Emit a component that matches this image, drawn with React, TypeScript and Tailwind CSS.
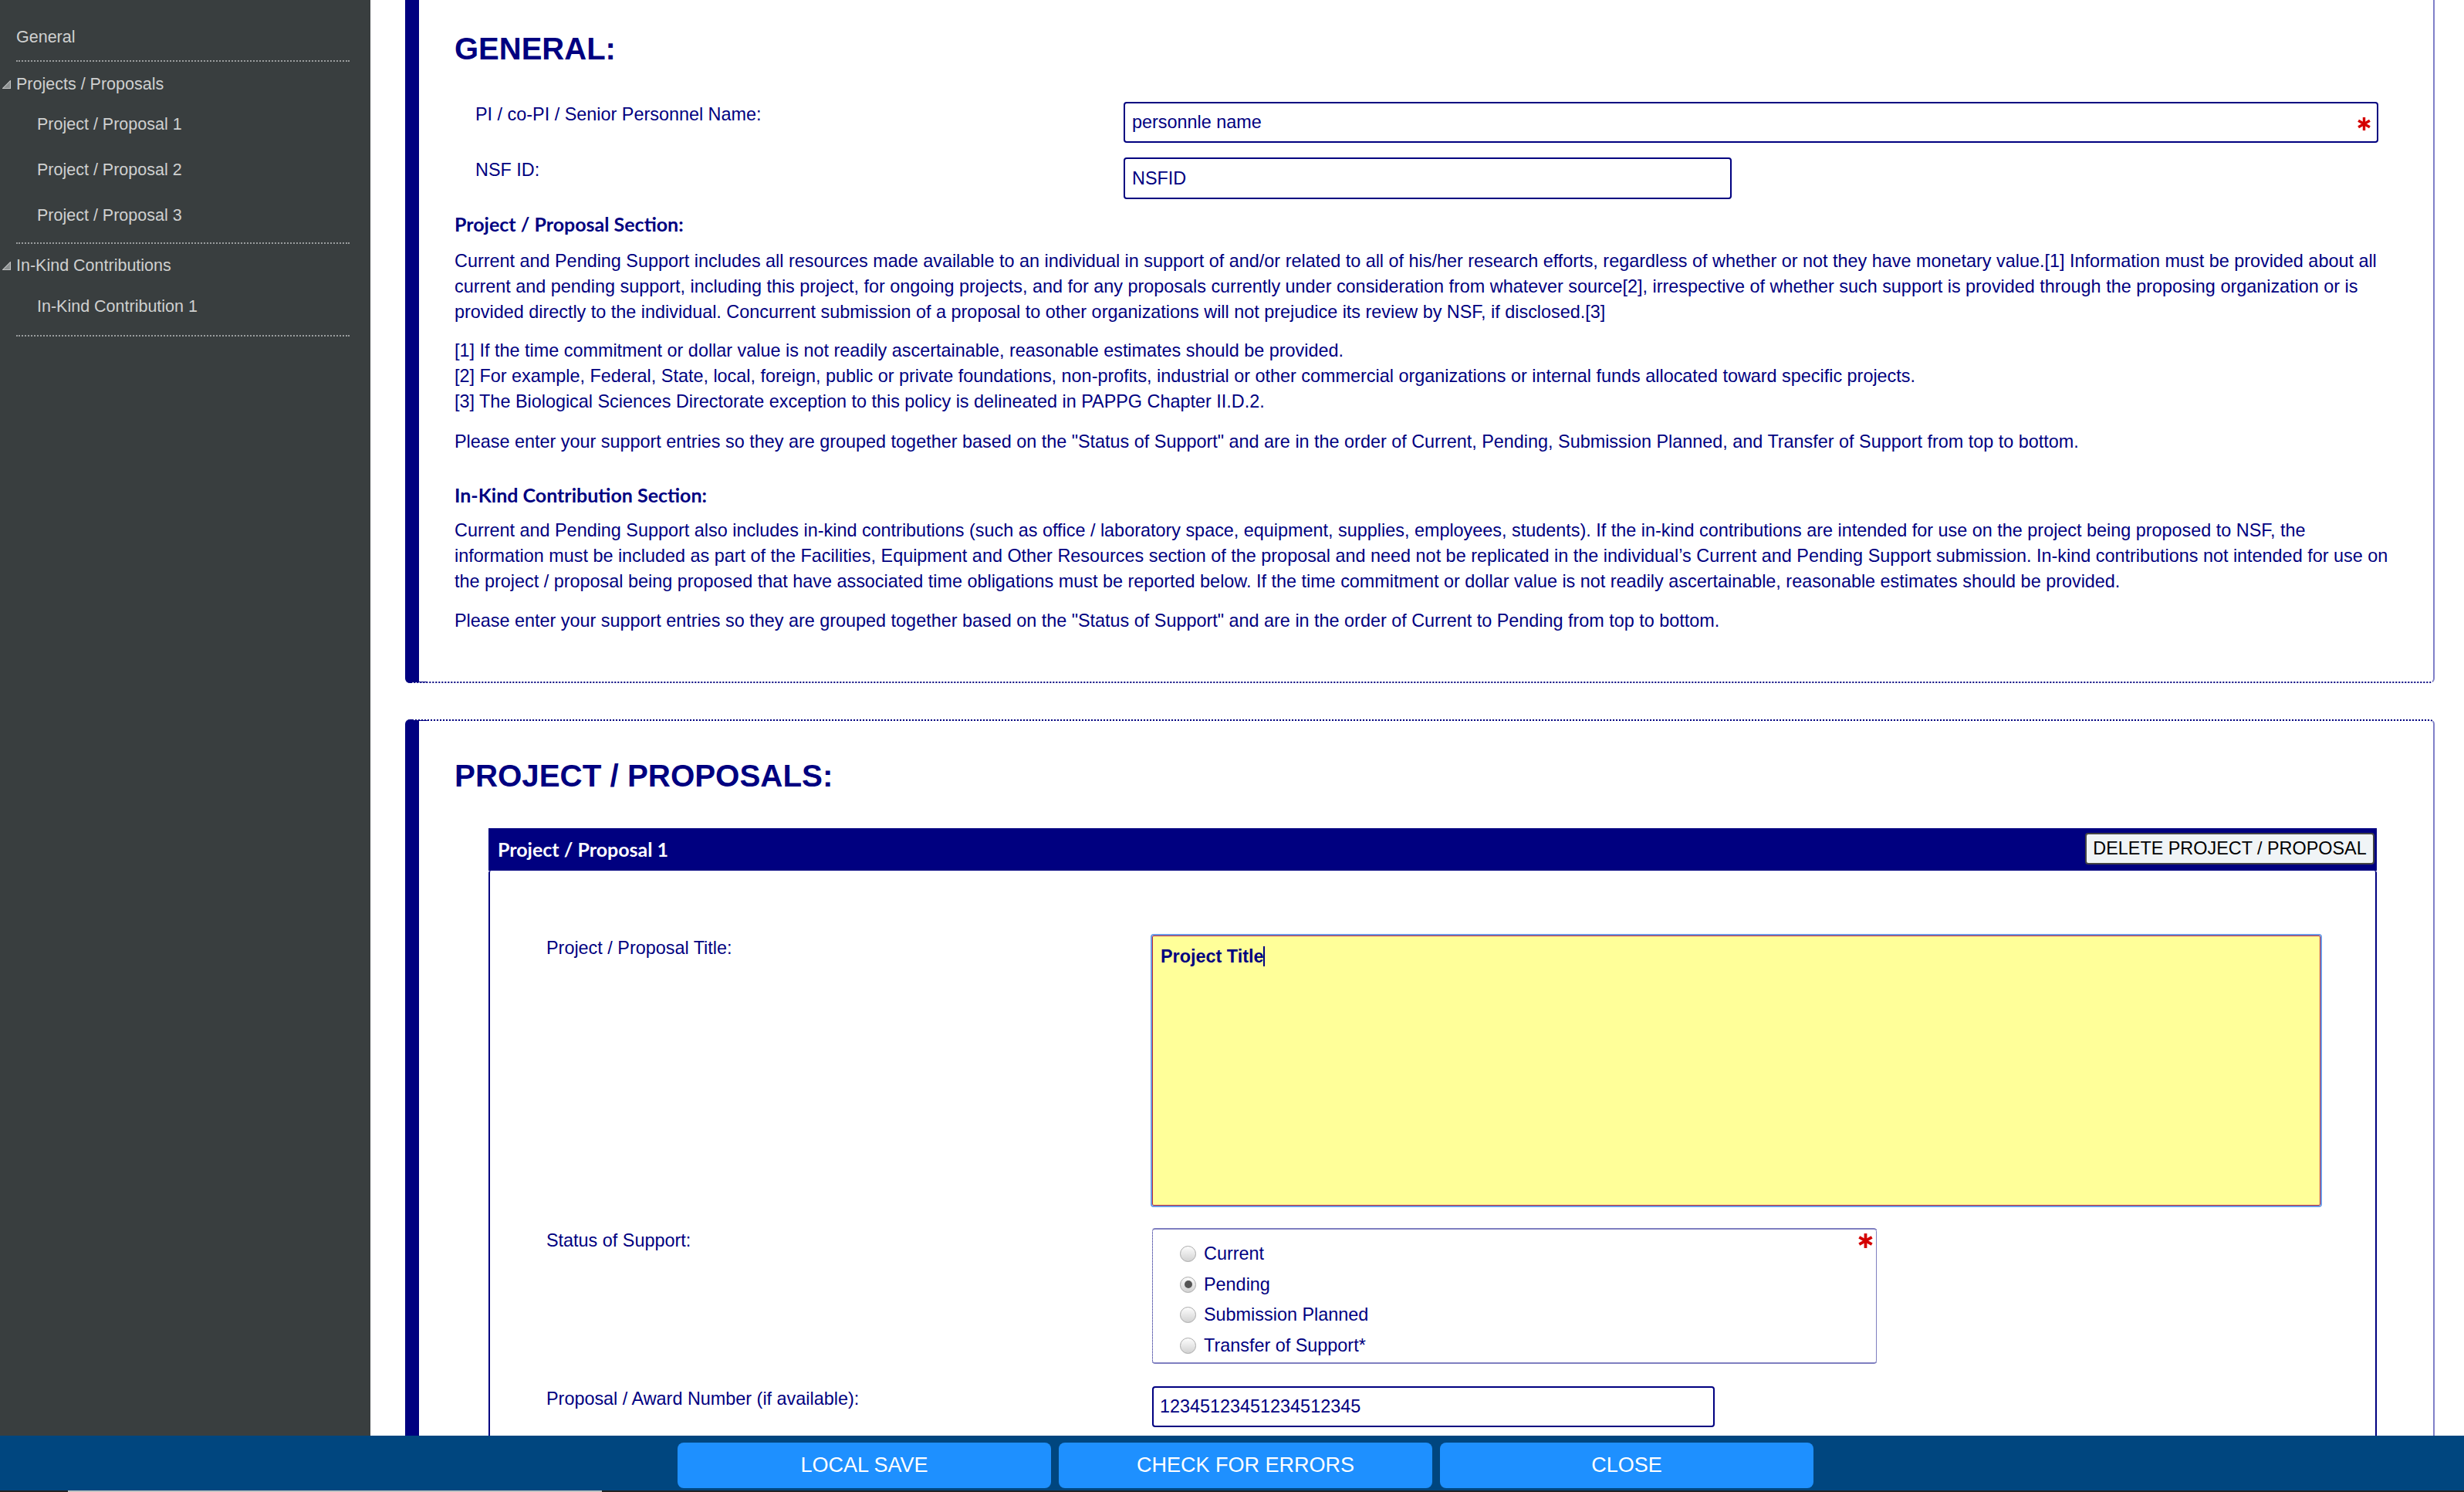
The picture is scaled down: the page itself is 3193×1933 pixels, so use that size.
import React from "react";

const ARIAL = "font-['Liberation_Sans',Arial,sans-serif]";
const LATO = "font-['Lato','Liberation_Sans',sans-serif]";

function Asterisk({ className = "" }: { className?: string }) {
  return (
    <svg viewBox="0 0 20 20" className={className}>
      <g stroke="#d40000" strokeWidth="3.6" strokeLinecap="butt">
        <line x1="10" y1="1" x2="10" y2="19" />
        <line x1="2.2" y1="5.5" x2="17.8" y2="14.5" />
        <line x1="2.2" y1="14.5" x2="17.8" y2="5.5" />
      </g>
    </svg>
  );
}

function Tri() {
  return (
    <svg viewBox="0 0 10 10" className="w-[11px] h-[11px] shrink-0">
      <polygon points="9.5,0.5 9.5,9.5 0.5,9.5" fill="#8c9091" stroke="#c0c2c2" strokeWidth="1" />
    </svg>
  );
}

function Divider() {
  return <div className="ml-[21px] w-[432px] border-t-2 border-dotted border-[#9a9d9e]" />;
}

function Sidebar() {
  return (
    <div className={`w-[480px] shrink-0 bg-[#393e3f] text-[#cfd0d0] text-[21.5px] ${ARIAL} pt-[28px]`}>
      <div className="h-[40px] flex items-center pl-[21px]">General</div>
      <div className="mt-[10px]">
        <Divider />
      </div>
      <div className="mt-[9px] h-[40px] flex items-center pl-[3px] gap-[7px]">
        <Tri />
        <span>Projects / Proposals</span>
      </div>
      <div className="mt-[3px]">
        {["Project / Proposal 1", "Project / Proposal 2", "Project / Proposal 3"].map((t) => (
          <div key={t} className="h-[59px] flex items-center pl-[48px]">
            {t}
          </div>
        ))}
      </div>
      <div className="mt-[5px]">
        <Divider />
      </div>
      <div className="mt-[8px] h-[40px] flex items-center pl-[3px] gap-[7px]">
        <Tri />
        <span>In-Kind Contributions</span>
      </div>
      <div className="mt-[4px] h-[58px] flex items-center pl-[48px]">In-Kind Contribution 1</div>
      <div className="mt-[8px]">
        <Divider />
      </div>
    </div>
  );
}

function Radio({ checked, label }: { checked?: boolean; label: string }) {
  return (
    <div className="h-[39.5px] flex items-center">
      <span className="w-[21px] h-[21px] rounded-full border border-[#a9a9a9] bg-gradient-to-b from-[#fdfdfd] to-[#d2d2d2] flex items-center justify-center shrink-0">
        {checked && <span className="w-[10px] h-[10px] rounded-full bg-[#555]" />}
      </span>
      <span className="ml-[10px]">{label}</span>
    </div>
  );
}

export default function App() {
  return (
    <div className={`w-[3193px] h-[1933px] overflow-hidden flex flex-col ${ARIAL}`}>
      <div className="flex-1 min-h-0 flex">
        <Sidebar />
        <div className="flex-1 min-w-0 overflow-hidden bg-white text-[#000080] text-[23.4px] leading-[33px]">
          {/* GENERAL card */}
          <div className="-mt-[10px] ml-[45px] mr-[38px] rounded-md border-2 border-dotted border-[#000080] border-l-[18px] [border-left-style:solid] border-r-[#8080c8] [border-right-style:solid] pl-[46px] pr-[20px] pt-[48px] pb-[62px]">
            <h2 className="text-[40px] leading-[46px] font-bold">GENERAL:</h2>
            <div className="mt-[46px] mr-[51px] flex">
              <div className="w-[867px] shrink-0 pl-[27px] leading-[32px]">PI / co-PI / Senior Personnel Name:</div>
              <div className="relative flex-1 h-[53px] border-2 border-[#000080] rounded-[4px] flex items-center pl-[9px]">
                personnle name
                <Asterisk className="absolute right-[7px] top-[17px] w-[19px] h-[19px]" />
              </div>
            </div>
            <div className="mt-[19px] flex">
              <div className="w-[867px] shrink-0 pl-[27px] leading-[32px]">NSF ID:</div>
              <div className="w-[788px] h-[54px] border-2 border-[#000080] rounded-[4px] flex items-center pl-[9px]">NSFID</div>
            </div>
            <h3 className={`mt-[16px] ${LATO} font-bold text-[25px]`}>Project / Proposal Section:</h3>
            <p className="mt-[15px] whitespace-nowrap">
              Current and Pending Support includes all resources made available to an individual in support of and/or related to all of his/her research efforts, regardless of whether or not they have monetary value.[1] Information must be provided about all
              <br />
              current and pending support, including this project, for ongoing projects, and for any proposals currently under consideration from whatever source[2], irrespective of whether such support is provided through the proposing organization or is
              <br />
              provided directly to the individual. Concurrent submission of a proposal to other organizations will not prejudice its review by NSF, if disclosed.[3]
            </p>
            <p className="mt-[17px]">
              [1] If the time commitment or dollar value is not readily ascertainable, reasonable estimates should be provided.
              <br />
              [2] For example, Federal, State, local, foreign, public or private foundations, non-profits, industrial or other commercial organizations or internal funds allocated toward specific projects.
              <br />
              [3] The Biological Sciences Directorate exception to this policy is delineated in PAPPG Chapter II.D.2.
            </p>
            <p className="mt-[19px]">
              Please enter your support entries so they are grouped together based on the "Status of Support" and are in the order of Current, Pending, Submission Planned, and Transfer of Support from top to bottom.
            </p>
            <h3 className={`mt-[36px] ${LATO} font-bold text-[25px]`}>In-Kind Contribution Section:</h3>
            <p className="mt-[13px] whitespace-nowrap">
              Current and Pending Support also includes in-kind contributions (such as office / laboratory space, equipment, supplies, employees, students). If the in-kind contributions are intended for use on the project being proposed to NSF, the
              <br />
              information must be included as part of the Facilities, Equipment and Other Resources section of the proposal and need not be replicated in the individual’s Current and Pending Support submission. In-kind contributions not intended for use on
              <br />
              the project / proposal being proposed that have associated time obligations must be reported below. If the time commitment or dollar value is not readily ascertainable, reasonable estimates should be provided.
            </p>
            <p className="mt-[18px]">
              Please enter your support entries so they are grouped together based on the "Status of Support" and are in the order of Current to Pending from top to bottom.
            </p>
          </div>

          {/* PROJECT / PROPOSALS card */}
          <div className="mt-[47px] ml-[45px] mr-[38px] rounded-md border-2 border-dotted border-[#000080] border-l-[18px] [border-left-style:solid] border-r-[#8080c8] [border-right-style:solid] pl-[46px] pt-[49px] pb-[40px]">
            <h2 className="text-[40.3px] leading-[46px] font-bold">PROJECT / PROPOSALS:</h2>
            <div className="mt-[44px] ml-[44px] mr-[73px]">
              <div className="h-[55px] bg-[#000080] flex items-center justify-between pl-[12px] pr-[3px]">
                <span className={`${LATO} font-bold text-white text-[25px]`}>Project / Proposal 1</span>
                <button className="w-[375px] h-[41px] bg-[#f0f4f6] border-2 border-[#444] rounded-[4px] text-black text-[23.4px] leading-none -mt-[2px]">
                  DELETE PROJECT / PROPOSAL
                </button>
              </div>
              <div className="border-x-2 border-[#000080] rounded-tl-[3px] rounded-tr-[3px] pt-[84px] pb-[300px]">
                <div className="flex">
                  <div className="w-[858px] shrink-0 pl-[73px] leading-[32px]">Project / Proposal Title:</div>
                  <div className="w-[1514px] h-[350px] bg-[#ffff99] border border-[#b8283a] outline-2 outline-[#6b9be6] rounded-[2px] pl-[10px] pt-[10px] leading-[32px] font-bold">
                    Project Title<span className="inline-block w-[2px] h-[26px] bg-[#000080] align-middle -mt-[4px]" />
                  </div>
                </div>
                <div className="mt-[29px] flex">
                  <div className="w-[858px] shrink-0 pl-[73px] leading-[32px]">Status of Support:</div>
                  <div className="relative w-[939px] h-[176px] rounded-[4px] border-y-2 border-y-[#7f7fc0] border-x border-x-[#000080] [border-left-style:dotted] [border-right-style:dotted] pl-[35px] pt-[12px]">
                    <Radio label="Current" />
                    <Radio checked label="Pending" />
                    <Radio label="Submission Planned" />
                    <Radio label="Transfer of Support*" />
                    <Asterisk className="absolute right-[3px] top-[4px] w-[21px] h-[21px]" />
                  </div>
                </div>
                <div className="mt-[29px] flex">
                  <div className="w-[858px] shrink-0 pl-[73px] leading-[32px]">Proposal / Award Number (if available):</div>
                  <div className="w-[729px] h-[53px] border-2 border-[#000080] rounded-[4px] flex items-center pl-[8px]">12345123451234512345</div>
                </div>
              </div>
            </div>
          </div>
        </div>
      </div>
      <div className="h-[71px] shrink-0 bg-[#00467f] flex items-start pt-[9px] pl-[878px] gap-[10px]">
        {["LOCAL SAVE", "CHECK FOR ERRORS", "CLOSE"].map((t) => (
          <button key={t} className="w-[484px] h-[59px] rounded-[8px] bg-[#1e90ff] text-white text-[27px] leading-none">
            {t}
          </button>
        ))}
      </div>
      <div className="h-[2px] shrink-0 bg-[#222] flex">
        <div className="ml-[88px] w-[692px] bg-[#c1c1c1]" />
      </div>
    </div>
  );
}
